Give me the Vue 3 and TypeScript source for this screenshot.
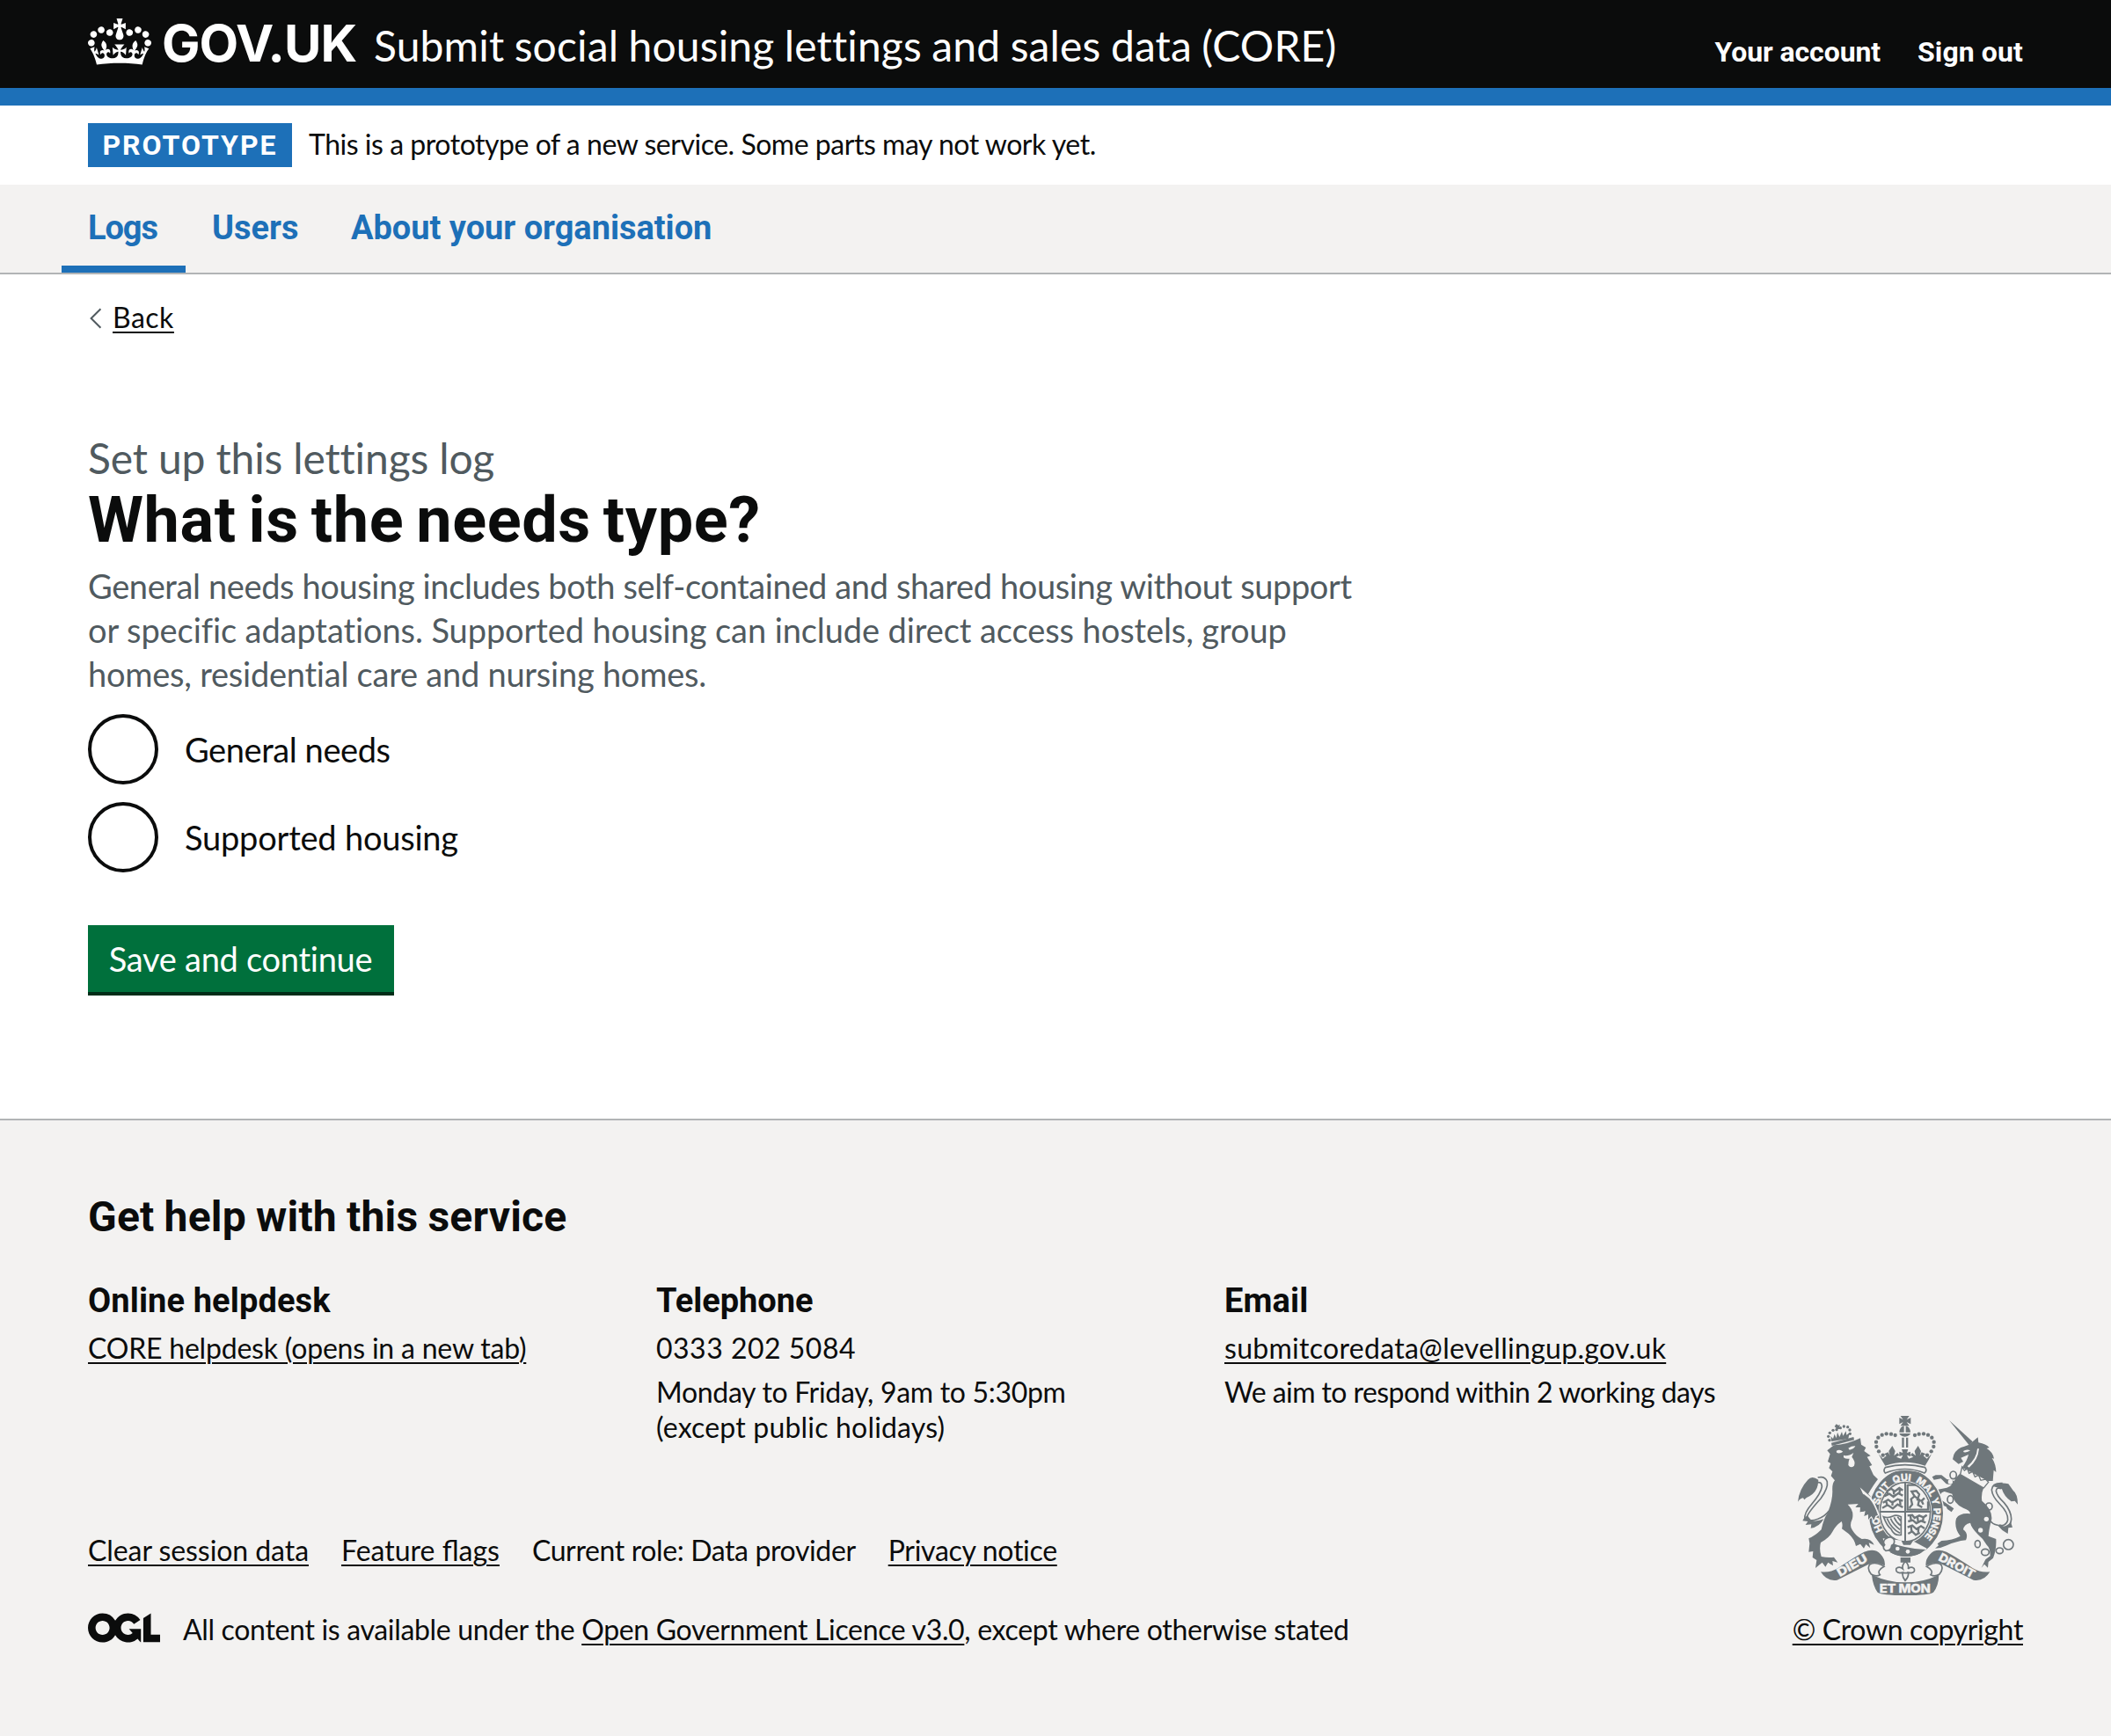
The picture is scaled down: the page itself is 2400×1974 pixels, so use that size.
<script setup lang="ts">
import { ref } from 'vue'

interface NavItem {
  id: string
  label: string
  current?: boolean
}

const navItems: NavItem[] = [
  { id: 'logs', label: 'Logs', current: true },
  { id: 'users', label: 'Users' },
  { id: 'about', label: 'About your organisation' },
]

const options = [
  { id: 'general', label: 'General needs' },
  { id: 'supported', label: 'Supported housing' },
]

const selected = ref<string | null>(null)

// Pearls on the arches of the central crown: [cx, cy]
const pearls: [number, number][] = [
  [362, 194], [348, 181], [340, 165], [339, 149], [346, 134], [359, 125], [374, 121], [390, 122], [404, 126],
]
// Pearls on the lion's crown
const smallPearls: [number, number][] = [
  [180, 143], [176, 130], [181, 118], [192, 109], [204, 107], [217, 101], [229, 96], [242, 98], [249, 108], [250, 121],
]
// Links of the unicorn's chain: [cx, cy, rx, ry]
const links: [number, number, number, number][] = [
  [602, 262, 11, 13], [592, 345, 10, 13], [724, 369, 11, 12], [685, 497, 9, 12],
  [711, 525, 13, 11], [760, 520, 12, 10], [790, 499, 17, 17],
]
</script>

<template>
  <div class="page">
    <header class="header">
      <a class="brand">
        <svg class="crown" viewBox="0 0 132 97" width="72" height="53" aria-hidden="true">
          <path fill="currentColor" fill-rule="evenodd" d="M25 30.2c3.5 1.5 7.7-.2 9.1-3.7 1.5-3.6-.2-7.8-3.9-9.2-3.6-1.4-7.6.3-9.1 3.9-1.4 3.5.3 7.5 3.9 9zM9 39.5c3.6 1.5 7.8-.2 9.2-3.7 1.5-3.6-.2-7.8-3.9-9.1-3.6-1.5-7.6.2-9.1 3.8-1.4 3.5.3 7.5 3.8 9zM4.4 57.2c3.5 1.5 7.7-.2 9.1-3.8 1.5-3.6-.2-7.7-3.9-9.1-3.5-1.5-7.6.3-9.1 3.8-1.4 3.5.3 7.6 3.9 9.1zm38.3-21.4c3.5 1.5 7.7-.2 9.1-3.8 1.5-3.6-.2-7.7-3.9-9.1-3.6-1.5-7.6.3-9.1 3.8-1.3 3.6.4 7.7 3.9 9.1zm64.4-5.6c-3.6 1.5-7.8-.2-9.1-3.7-1.5-3.6.2-7.8 3.8-9.2 3.6-1.4 7.7.3 9.2 3.9 1.3 3.5-.4 7.5-3.9 9zm15.9 9.3c-3.6 1.5-7.7-.2-9.1-3.7-1.5-3.6.2-7.8 3.7-9.1 3.6-1.5 7.7.2 9.2 3.8 1.5 3.5-.3 7.5-3.8 9zm4.7 17.7c-3.6 1.5-7.8-.2-9.2-3.8-1.5-3.6.2-7.7 3.9-9.1 3.6-1.5 7.7.3 9.2 3.8 1.3 3.5-.4 7.6-3.9 9.1zM89.3 35.8c-3.6 1.5-7.8-.2-9.2-3.8-1.4-3.6.2-7.7 3.9-9.1 3.6-1.5 7.7.3 9.2 3.8 1.4 3.6-.3 7.7-3.9 9.1zM69.7 17.7l8.9 4.7V9.3l-8.9 2.8c-.2-.3-.5-.6-.9-.9L72.4 0H59.6l3.5 11.2c-.3.3-.6.5-.9.9l-8.8-2.8v13.1l8.8-4.7c.3.3.6.7.9.9l-5 15.4v.1c-.2.8-.4 1.6-.4 2.4 0 4.1 3.1 7.5 7 8.1h.2c.3 0 .7.1 1 .1.4 0 .7 0 1-.1h.2c4-.6 7.1-4.1 7.1-8.1 0-.8-.1-1.7-.4-2.4V34l-5.1-15.4c.4-.2.7-.6 1-.9zM66 92.8c16.9 0 32.8 1.1 47.1 3.2 4-16.9 8.9-26.7 14-33.5l-9.6-3.4c1 4.9 1.1 7.2 0 10.2-1.5-1.4-3-4.3-4.2-8.7L108.6 76c2.8-2 5-3.2 7.5-3.3-4.4 9.4-10 11.9-13.6 11.2-4.3-.8-6.3-4.6-5.6-7.9 1-4.7 5.7-5.9 8-.5 4.3-8.7-3-11.4-7.6-8.8 7.1-7.2 7.9-13.5 2.1-21.1-8 6.1-8.1 12.3-4.5 20.8-4.7-5.4-12.1-2.5-9.5 6.2 3.4-5.2 7.9-2 7.2 3.1-.6 4.3-6.4 7.8-13.5 7.2-10.3-.9-10.9-8-11.2-13.8 2.5-.5 7.1 1.8 11 7.3L80.2 60c-4.1 4.4-8 5.3-12.3 5.4 1.4-4.4 8-11.6 8-11.6H55.5s6.4 7.2 7.9 11.6c-4.2-.1-8-1-12.3-5.4l1.4 16.4c3.9-5.5 8.5-7.7 10.9-7.3-.3 5.8-.9 12.8-11.1 13.8-7.2.6-12.9-2.9-13.5-7.2-.7-5 3.8-8.3 7.1-3.1 2.7-8.7-4.6-11.6-9.4-6.2 3.7-8.5 3.6-14.7-4.6-20.8-5.8 7.6-5 13.9 2.2 21.1-4.7-2.6-11.9.1-7.7 8.8 2.3-5.5 7.1-4.2 8.1.5.7 3.3-1.3 7.1-5.7 7.9-3.5.7-9-1.8-13.5-11.2 2.5.1 4.7 1.3 7.5 3.3l-4.7-15.4c-1.2 4.4-2.7 7.2-4.3 8.7-1.1-3-.9-5.3 0-10.2l-9.5 3.4c5 6.9 9.9 16.7 14 33.5 14.8-2.1 30.8-3.2 47.7-3.2z" />
        </svg>
        <span class="wordmark">GOV.UK</span>
      </a>
      <span class="service-name">Submit social housing lettings and sales data (CORE)</span>
      <nav class="account">
        <a class="account-link">Your account</a>
        <a>Sign out</a>
      </nav>
    </header>

    <div class="phase">
      <strong class="tag">PROTOTYPE</strong>
      <span class="phase-text">This is a prototype of a new service. Some parts may not work yet.</span>
    </div>

    <nav class="primary">
      <a v-for="item in navItems" :key="item.id" class="primary-item" :class="[item.id, { current: item.current }]">{{ item.label }}</a>
    </nav>

    <main class="main">
      <a class="back">
        <svg width="16" height="24" viewBox="0 0 16 24" aria-hidden="true">
          <path d="M14.4 1.2 3.6 12l10.8 10.8" fill="none" stroke="#505a5f" stroke-width="2" />
        </svg>
        <span class="link">Back</span>
      </a>

      <form @submit.prevent>
        <div class="caption">Set up this lettings log</div>
        <h1 class="title">What is the needs type?</h1>
        <p class="hint">
          <span class="hint-a">General needs housing includes both self-contained and shared housing without support</span>
          <span class="hint-b">or specific adaptations. Supported housing can include direct access hostels, group</span>
          <span class="hint-c">homes, residential care and nursing homes.</span>
        </p>
        <div class="radios">
          <label v-for="o in options" :key="o.id" class="radio" @click="selected = o.id">
            <span class="circle" :class="{ checked: selected === o.id }"></span>
            <span class="radio-label" :class="o.id">{{ o.label }}</span>
          </label>
        </div>
        <button class="button" type="submit">Save and continue</button>
      </form>
    </main>

    <footer class="footer">
      <h2 class="help-title">Get help with this service</h2>
      <div class="help">
        <section>
          <h3>Online helpdesk</h3>
          <p><a class="link helpdesk">CORE helpdesk (opens in a new tab)</a></p>
        </section>
        <section>
          <h3 class="phone-title">Telephone</h3>
          <p class="phone">0333 202 5084</p>
          <p class="hours">Monday to Friday, 9am to 5:30pm</p>
          <p class="holidays">(except public holidays)</p>
        </section>
        <section>
          <h3>Email</h3>
          <p><a class="link email">submitcoredata@levellingup.gov.uk</a></p>
          <p class="respond">We aim to respond within 2 working days</p>
        </section>
      </div>

      <div class="meta">
        <div class="meta-main">
          <ul class="meta-links">
            <li><a class="link clear">Clear session data</a></li>
            <li><a class="link flags">Feature flags</a></li>
            <li class="role">Current role: Data provider</li>
            <li><a class="link privacy">Privacy notice</a></li>
          </ul>
          <div class="licence">
            <svg class="ogl" viewBox="0 0 483.2 195.7" width="82" height="34" aria-hidden="true">
              <path fill="currentColor" d="M421.5 142.8V.1l-50.7 32.3v161.1h112.4v-50.7zm-122.3-9.6A47.12 47.12 0 0 1 221 97.8c0-26 21.1-47.1 47.1-47.1 16.7 0 31.4 8.7 39.7 21.8l42.7-27.2A97.63 97.63 0 0 0 268.1 0c-36.5 0-68.3 20.1-85.1 49.7A98 98 0 0 0 97.8 0C43.9 0 0 43.9 0 97.8s43.9 97.8 97.8 97.8c36.5 0 68.3-20.1 85.1-49.7a97.76 97.76 0 0 0 149.6 25.4l19.4 22.2h3v-87.8h-80l24.3 27.5zM97.8 145c-26 0-47.1-21.1-47.1-47.1s21.1-47.1 47.1-47.1 47.1 21.1 47.1 47.1S123.8 145 97.8 145" />
            </svg>
            <span class="licence-text"><span class="lic-a">All content is available under the </span><a class="link lic-b">Open Government Licence v3.0</a><span class="lic-c">, except where otherwise stated</span></span>
          </div>
        </div>

        <div class="copyright">
          <svg class="crest" viewBox="66 54 762 624" width="254" height="208" aria-hidden="true">
            <defs>
              <path id="garter" d="M441 499A94 109 0 0 1 441 281A94 109 0 0 1 441 499" />
            </defs>
            <!-- lion -->
            <g class="ink">
              <path d="M172 178L195 160Q240 158 285 136L288 158L304 168L298 180L320 196L308 200L325 228L316 232L330 262L345 276Q330 295 312 326Q332 345 342 375L350 402L338 400L332 417L324 402L312 414L312 395L298 402L302 385L284 388L290 372L268 372L278 360L242 362Q264 382 258 410Q246 435 258 450Q270 470 290 480Q320 474 332 500L314 493L319 511L304 498L297 512L285 497L270 504Q265 480 245 462L222 445Q226 430 221 420Q200 435 190 455Q180 475 150 492Q144 515 152 540Q175 545 195 542L208 560L190 555L192 571L175 560L166 575L155 560L132 579L136 552L122 543L124 522L109 524L112 495L109 478Q130 470 152 448Q160 410 174 390Q190 350 190 318Q188 290 198 280L185 265L190 250L178 238L184 222L174 216L182 190Z" />
              <path d="M186 152L262 132L264 142L188 162Z" />
              <path d="M187 147L184 130L192 138L197 122L203 136L207 116L214 132L222 114L226 128L236 112L238 125L248 118L244 138Z" />
              <circle v-for="(p, i) in smallPearls" :key="i" :cx="p[0]" :cy="p[1]" r="5" />
              <path d="M203 88L210 92L216 90L213 98L216 104L205 106L201 100L197 96Z" />
              <path d="M142 278Q120 262 106 278Q76 310 72 353Q78 342 90 340L94 346Q100 338 112 334Q136 318 140 296Z" />
              <path d="M104 400Q94 405 88 418L106 420L98 432L118 430L116 443Q145 440 160 412Q135 422 118 416Z" />
            </g>
            <path class="line" d="M140 270Q165 264 172 284Q176 306 150 342Q110 386 104 402Q104 425 140 412Q165 402 178 384" />
            <path class="line" d="M132 290Q154 280 154 302Q150 325 120 360Q92 392 96 412" />
            <g class="paper">
              <path d="M203 180Q214 172 226 182Q216 190 205 186Z" />
              <path d="M244 170Q256 162 268 163Q262 174 248 176Z" />
              <path d="M228 194Q242 200 262 186L256 200Q270 216 264 230Q252 240 244 228Q244 215 248 206Q236 208 228 202Z" />
            </g>

            <!-- unicorn -->
            <g class="ink">
              <path d="M588 75L668 148L656 160Z" />
              <path d="M656 158L668 148L686 133L688 151Q714 156 725 168L716 171Q738 184 741 206L734 204Q748 226 748 252L740 245L737 282L720 282L632 236Q650 212 654 192L628 203L636 216L620 224L600 208L604 192Q614 170 640 164Z" />
              <path d="M626 256L706 304Q696 328 700 350Q735 378 733 412Q724 445 722 470L748 480Q750 515 738 545L722 558L720 578L708 566L698 578L712 550L728 538Q728 510 716 500Q704 478 686 464Q664 442 660 425Q638 430 636 448Q655 462 645 484Q610 488 580 502Q560 512 540 512L552 502L548 496L562 486Q600 484 626 470Q604 442 612 410Q625 390 660 394Q660 382 636 374Q604 360 598 326L572 318Q552 322 560 346L604 376L596 388L582 378L578 370L560 362Q538 336 546 312L580 305Q600 300 610 272Z" />
              <path d="M600 296L578 292L560 274L536 278L530 268L542 262L562 262L580 276L606 282Z" />
              <path d="M738 300Q760 284 790 292L806 314Q822 326 822 362L812 350L800 352Q775 335 768 310Z" />
              <path d="M762 430Q775 446 798 422L804 440L790 442L788 462Q768 452 754 434Z" />
            </g>
            <path class="line" d="M770 290Q735 288 733 312Q735 335 760 360Q790 390 788 415Q782 440 750 432Q720 425 722 392" />
            <path class="line" d="M766 308Q750 302 748 316Q750 332 775 356Q800 385 800 412Q798 432 786 440" />
            <g class="paper">
              <path d="M636 180Q648 172 660 178Q650 186 638 184Z" />
              <path d="M690 172Q686 212 656 236L650 232Q682 206 684 172Z" />
              <path class="edge" d="M632 234L640 246L650 240L656 256L668 250L676 268L688 262L696 280L712 276L722 286L706 306L626 260Z" />
              <circle cx="592" cy="285" r="8" /><circle cx="715" cy="412" r="8" /><circle cx="695" cy="450" r="8" />
            </g>
            <ellipse v-for="(l, i) in links" :key="'l' + i" class="chain" :cx="l[0]" :cy="l[1]" :rx="l[2]" :ry="l[3]" />

            <!-- garter and shield -->
            <ellipse class="ink garter" cx="441" cy="392" rx="128" ry="150" />
            <path class="paper" d="M366 234Q437 216 510 234L514 248L504 258Q437 234 370 258L362 248Z" />
            <path class="rim" d="M370 236Q437 218 506 236Q514 246 504 255Q437 228 370 255Q362 246 370 236Z" />
            <ellipse class="paper" cx="438" cy="388" rx="91" ry="107" />
            <ellipse class="thin" cx="438" cy="388" rx="86" ry="101" />
            <path class="cross" d="M438 287V492M350 387H526" />
            <g class="charge">
              <path d="M374 318L390 308L402 318L418 306L430 314M366 334L384 326L398 336L414 324L430 332M362 356L380 346L394 356L412 344L430 350M360 374L378 364L396 376L412 362L430 372M376 312L378 326M398 312L400 328M420 310L418 326M372 348L376 362M396 350L394 366M420 348L422 364" />
              <path d="M446 296H474M446 294V380H516V352M452 374L462 362L458 344L470 334L460 318L476 316L486 328L480 346L494 350L504 340M470 334L486 346L482 364L496 372M494 350L500 362" />
              <path d="M446 400L462 398L470 408L486 400L500 406L512 398M448 420L464 416L476 426L492 418L508 424M446 440L462 434L476 446L492 436L504 444M448 462L462 454L474 466L488 458M456 402L458 416M480 404L482 420M500 408L498 422M458 436L460 454M484 440L482 458" />
            </g>
            <path class="harp" d="M364 404Q380 410 396 402Q408 396 424 404V466Q400 470 390 446Q376 436 364 404ZM376 410Q392 446 420 460M388 410Q398 432 420 448M400 406Q408 424 422 434M412 404L422 418" />
            <g class="motto">
              <text><textPath href="#garter" startOffset="96">HO</textPath></text>
              <text><textPath href="#garter" startOffset="184">SOIT</textPath></text>
              <text><textPath href="#garter" startOffset="276">QUI</textPath></text>
              <text><textPath href="#garter" startOffset="351">MAL</textPath></text>
              <text><textPath href="#garter" startOffset="430">Y</textPath></text>
              <text><textPath href="#garter" startOffset="463">PENSE</textPath></text>
            </g>
            <!-- lion's foreleg over the garter -->
            <path class="paper" d="M284 304L322 338Q338 360 350 398L340 406L332 422L322 408L308 420L306 400L296 404L300 340Z" />
            <path class="ink" d="M296 326L316 342Q334 364 345 398L337 401L331 416L323 402L312 414L312 396L298 402L302 385L284 388L286 340Z" />
            <path class="paper" d="M362 478L470 490L512 512L500 528L410 520L372 528Z" />
            <path class="ink" d="M384 490Q430 512 508 516Q480 540 440 540Q404 538 378 518Z" />
            <path class="buckle" d="M370 480Q390 466 400 482Q404 496 392 502Q390 520 372 520Q358 510 368 500Q360 490 370 480Z" />
            <circle class="paper" cx="412" cy="513" r="7" /><circle class="paper" cx="447" cy="523" r="7" />
            <path class="ink" d="M422 543H456V560H422ZM425 486H465L456 500H432Z" />
            <path class="rim" d="M439 556Q452 568 448 582Q456 572 468 580Q474 594 458 596L448 594Q452 608 438 622Q426 608 430 594L420 596Q404 594 408 580Q420 572 430 582Q426 568 439 556ZM424 596H454" />

            <!-- crown -->
            <g class="ink">
              <path d="M422 60L452 60L443 73L457 66V88L443 81L452 94L422 94L431 81L418 88V66L431 73Z" />
              <path d="M418 116Q420 96 434 94V116ZM440 94Q454 96 456 116H440ZM418 120H456Q452 130 437 131Q422 130 418 120Z" />
              <path d="M427 134H434V168H427ZM441 134H448V168H441Z" />
              <template v-for="(p, i) in pearls" :key="'p' + i">
                <circle :cx="p[0]" :cy="p[1]" r="6.5" />
                <circle :cx="875 - p[0]" :cy="p[1]" r="6.5" />
              </template>
              <path d="M347 190L362 206L374 196L366 190L380 184L386 196L382 180L394 162L404 180L400 196L412 186L418 194L408 200L424 206L430 194L418 198V182L430 186L426 174H448L444 186L456 182V198L444 194L450 206L466 200L456 194L462 186L474 196L470 180L482 162L492 180L488 196L494 184L508 190L500 196L512 206L528 190Q518 212 506 230Q437 206 370 230Q358 212 347 190Z" />
            </g>

            <!-- scroll -->
            <path class="ink" d="M150 592Q182 596 208 580Q260 544 298 524Q335 510 354 532Q372 552 368 572Q342 556 318 564Q262 592 206 620Q170 626 150 592Z" />
            <path class="ink" d="M727 592Q695 596 669 580Q617 544 579 524Q542 510 523 532Q505 552 509 572Q535 556 559 564Q615 592 671 620Q707 626 727 592Z" />
            <path class="ribbon" d="M366 574Q340 556 318 566Q306 580 322 600Q338 610 352 602Q340 588 366 574ZM511 574Q537 556 559 566Q571 580 555 600Q539 610 525 602Q537 588 511 574Z" />
            <path class="ink" d="M324 602Q380 628 438 628Q500 628 553 602Q552 640 534 662Q520 672 438 672Q358 672 344 662Q328 640 324 602Z" />
            <g class="motto big">
              <text x="350" y="662" textLength="174" lengthAdjust="spacingAndGlyphs">ET MON</text>
              <text transform="translate(215 610) rotate(-30)" textLength="112" lengthAdjust="spacingAndGlyphs">DIEU</text>
              <text transform="translate(549 551) rotate(28.5)" textLength="134" lengthAdjust="spacingAndGlyphs">DROIT</text>
            </g>
          </svg>
          <a class="link crown-link">© Crown copyright</a>
        </div>
      </div>
    </footer>
  </div>
</template>

<style>
body {
  background: #fff;
}
</style>

<style scoped>
.page {
  box-sizing: border-box;
  width: 2400px;
  height: 1974px;
  display: flex;
  flex-direction: column;
  overflow: hidden;
  color: #0b0c0c;
  font: 400 32px/40px Lato, "Liberation Sans", sans-serif;
  white-space: nowrap;
}

h1, h2, h3, p, ul {
  margin: 0;
  padding: 0;
}

h1, h2, h3, .primary, .account, .tag {
  font-family: Roboto, "Liberation Sans", sans-serif;
  font-weight: 700;
}

.link {
  text-decoration: underline;
  text-decoration-thickness: 2px;
  text-underline-offset: 4px;
}

/* Header */
.header {
  box-sizing: border-box;
  height: 120px;
  padding: 19px 100px 0;
  display: flex;
  align-items: baseline;
  background: #0b0c0c;
  border-bottom: 20px solid #1d70b8;
  color: #fff;
}
.brand {
  width: 325px;
  display: flex;
  align-items: baseline;
}
.crown {
  align-self: flex-start;
  margin: 2px 12px 0 0;
}
.wordmark {
  font: 700 58px/60px Inter, "Liberation Sans", sans-serif;
  letter-spacing: -1px;
}
.service-name {
  font-size: 48px;
  line-height: 60px;
  letter-spacing: 0.14px;
  word-spacing: -1px;
}
.account {
  margin-left: auto;
  display: flex;
  gap: 42px;
  letter-spacing: 0.1px;
}
.account-link {
  letter-spacing: -0.1px;
}

/* Phase banner */
.phase {
  box-sizing: border-box;
  height: 90px;
  padding: 20px 100px;
  display: flex;
  gap: 19px;
  line-height: 50px;
}
.tag {
  box-sizing: border-box;
  width: 232px;
  height: 50px;
  background: #1d70b8;
  color: #fff;
  text-align: center;
  letter-spacing: 2px;
}
.phase-text {
  margin-top: -1px;
  letter-spacing: -0.47px;
}

/* Primary navigation */
.primary {
  box-sizing: border-box;
  height: 102px;
  padding: 0 70px;
  display: flex;
  background: #f3f2f1;
  border-bottom: 2px solid #b1b4b6;
  color: #1d70b8;
  font-size: 38px;
  line-height: 50px;
}
.primary-item {
  box-sizing: border-box;
  padding: 24px 30px 0;
}
.primary-item.current {
  border-bottom: 8px solid #1d70b8;
}
.logs {
  width: 141px;
  letter-spacing: -1.1px;
}
.users {
  width: 158px;
}
.about {
  letter-spacing: -0.02px;
}

/* Question */
.main {
  height: 960px;
  padding: 0 100px;
}
.back {
  display: flex;
  align-items: flex-start;
  gap: 12px;
  padding-top: 28.8px;
  height: 150px;
  letter-spacing: 0.5px;
}
.back svg {
  margin-top: 9px;
}
.caption {
  font-size: 48px;
  line-height: 60px;
  color: #505a5f;
  letter-spacing: -0.15px;
}
.title {
  padding-top: 1.6px;
  font-size: 72px;
  line-height: 80px;
  letter-spacing: 0.6px;
  word-spacing: -4.5px;
}
.hint {
  padding-top: 9px;
  font-size: 38px;
  line-height: 50px;
  color: #505a5f;
}
.hint span {
  display: block;
}
.hint-a {
  letter-spacing: -0.38px;
}
.hint-b {
  letter-spacing: -0.09px;
}
.hint-c {
  letter-spacing: -0.24px;
}
.radios {
  margin-top: 20.6px;
  display: flex;
  flex-direction: column;
  gap: 20px;
}
.radio {
  display: flex;
  gap: 30px;
  font-size: 38px;
  line-height: 50px;
}
.circle {
  box-sizing: border-box;
  width: 80px;
  height: 80px;
  border: 4px solid #0b0c0c;
  border-radius: 50%;
}
.circle.checked {
  background: radial-gradient(#0b0c0c 20px, transparent 21px);
}
.radio-label {
  padding-top: 15.3px;
}
.general {
  letter-spacing: -0.42px;
}
.supported {
  letter-spacing: -0.21px;
}
.button {
  display: block;
  box-sizing: border-box;
  width: 348px;
  height: 76px;
  margin-top: 60px;
  padding: 1px 1px 0 0;
  border: 0;
  background: #00703c;
  box-shadow: 0 4px 0 #002d18;
  color: #fff;
  font: 400 38px/50px Lato, "Liberation Sans", sans-serif;
  letter-spacing: -0.28px;
}

/* Footer */
.footer {
  box-sizing: border-box;
  flex: 1;
  padding: 79.6px 100px 0;
  background: #f3f2f1;
  border-top: 2px solid #b1b4b6;
}
.help-title {
  font-size: 48px;
  line-height: 60px;
  letter-spacing: 0.2px;
  word-spacing: -1px;
}
.help {
  margin-top: 40.4px;
  height: 180px;
  display: grid;
  grid-template-columns: 646px 646px 1fr;
}
.help h3 {
  font-size: 38px;
  line-height: 50px;
  letter-spacing: 0.12px;
  margin-bottom: 8.6px;
}
.help .phone-title {
  letter-spacing: -0.05px;
}
.help p + p {
  margin-top: 10px;
}
.help .hours + .holidays {
  margin-top: 0;
}
.helpdesk {
  letter-spacing: -0.2px;
}
.phone {
  letter-spacing: 0.5px;
}
.hours {
  letter-spacing: -0.31px;
}
.holidays {
  letter-spacing: 0.19px;
}
.email {
  letter-spacing: 0.29px;
}
.respond {
  letter-spacing: -0.57px;
}
.meta {
  height: 238.6px;
  display: flex;
  justify-content: space-between;
  align-items: flex-end;
}
.meta-links {
  display: flex;
  gap: 37px;
  list-style: none;
  margin-bottom: 50px;
}
.clear {
  letter-spacing: -0.07px;
}
.flags {
  letter-spacing: 0;
}
.role {
  letter-spacing: -0.38px;
}
.privacy {
  letter-spacing: -0.3px;
}
.licence {
  display: flex;
  gap: 26px;
}
.ogl {
  margin-top: 1px;
}
.lic-a {
  white-space: pre;
  letter-spacing: -0.32px;
}
.lic-b {
  letter-spacing: -0.33px;
}
.lic-c {
  letter-spacing: -0.3px;
}
.copyright {
  display: flex;
  flex-direction: column;
  align-items: flex-end;
  gap: 17px;
}
.crown-link {
  letter-spacing: -0.36px;
}

/* Royal arms */
.crest {
  display: block;
  margin-right: 4px;
}
.ink {
  fill: #6f777b;
}
.paper {
  fill: #f3f2f1;
}
.garter {
  stroke: #f3f2f1;
  stroke-width: 4;
}
.edge {
  stroke: #6f777b;
  stroke-width: 4;
}
.line, .chain, .thin, .cross, .charge, .harp {
  fill: none;
  stroke: #6f777b;
  stroke-width: 5;
}
.charge {
  stroke-width: 7;
}
.harp {
  stroke-width: 5;
}
.cross {
  stroke-width: 6;
}
.rim, .buckle, .ribbon {
  fill: #f3f2f1;
  stroke: #6f777b;
  stroke-width: 5;
}
.motto {
  fill: #f3f2f1;
  stroke: #f3f2f1;
  stroke-width: 0.8;
  font: 800 33px Inter, "Liberation Sans", sans-serif;
  letter-spacing: -0.5px;
}
.motto.big {
  font-size: 40px;
}
</style>
